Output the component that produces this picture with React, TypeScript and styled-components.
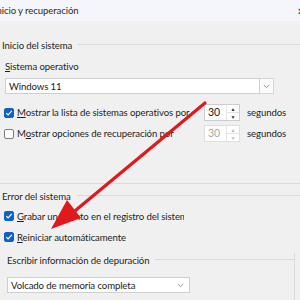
import styled, { createGlobalStyle } from "styled-components";

const GlobalStyle = createGlobalStyle`
  html, body {
    margin: 0;
    padding: 0;
    background: #f0f0f0;
  }
`;

const Window = styled.div`
  position: relative;
  width: 300px;
  height: 300px;
  overflow: hidden;
  background: #f0f0f0;
  font-family: Lato, "Noto Sans", sans-serif;
  font-size: 9.6px;
  letter-spacing: -0.1px;
  color: #1e1e1e;
`;

const TitleBar = styled.div`
  height: 21px;
  display: flex;
  align-items: center;
  justify-content: space-between;
  background: #f4f6fb;
`;

const Title = styled.span`
  margin-left: -6px;
  color: #2a2a2a;
`;

const Close = styled.span`
  margin-right: -5px;
  font-size: 10px;
  color: #333;
`;

const Body = styled.div`
  display: flex;
  flex-direction: column;
`;

const Group = styled.div<{ $inner?: boolean; $top: number; $pb: number }>`
  display: flex;
  flex-direction: column;
  margin-top: ${(p) => p.$top}px;
  padding-bottom: ${(p) => p.$pb}px;
  border-bottom: ${(p) => (p.$inner ? "none" : "1px solid #dadada")};
  border-right: ${(p) => (p.$inner ? "1px solid #dadada" : "none")};
  width: ${(p) => (p.$inner ? "294px" : "auto")};
`;

const GroupHead = styled.div<{ $indent: number }>`
  display: flex;
  align-items: center;
  height: 14px;
  padding-left: ${(p) => p.$indent}px;
`;

const Legend = styled.span`
  white-space: nowrap;
  color: #262626;
`;

const HeadLine = styled.span`
  flex: 1;
  height: 1px;
  margin-left: 6px;
  margin-top: -1px;
  background: #dadada;
`;

const FieldLabel = styled.div`
  height: 14px;
  line-height: 14px;
  margin: 8px 0 0 5px;
`;

const Combo = styled.div<{ $width: number; $left: number; $top: number }>`
  display: flex;
  align-items: stretch;
  width: ${(p) => p.$width}px;
  height: 16px;
  margin: ${(p) => p.$top}px 0 0 ${(p) => p.$left}px;
`;

const ComboField = styled.div`
  flex: 1;
  display: flex;
  align-items: center;
  justify-content: space-between;
  padding: 0 5px 0 3px;
  background: #fff;
  border: 1px solid #cfcfcf;
  color: #1a1a1a;
`;

const ComboButton = styled.div`
  width: 13px;
  display: flex;
  align-items: center;
  justify-content: center;
  background: #fbfbfb;
  border: 1px solid #d6d6d6;
  border-left: none;
`;

const Chevron = () => (
  <svg width="7" height="5" viewBox="0 0 7 5">
    <path d="M0.8 1 L3.5 3.6 L6.2 1" fill="none" stroke="#8a8a8a" strokeWidth="0.9" />
  </svg>
);

const Row = styled.div<{ $top: number; $height: number }>`
  display: flex;
  align-items: center;
  height: ${(p) => p.$height}px;
  margin: ${(p) => p.$top}px 0 0 4px;
`;

const Box = styled.span<{ $checked?: boolean }>`
  width: 10px;
  height: 10px;
  box-sizing: border-box;
  border-radius: 2px;
  flex: none;
  display: flex;
  align-items: center;
  justify-content: center;
  background: ${(p) => (p.$checked ? "#1063c4" : "#fff")};
  border: 1px solid ${(p) => (p.$checked ? "#1063c4" : "#7d7d7d")};
`;

const CheckLabel = styled.span<{ $width?: number }>`
  margin-left: 3px;
  white-space: nowrap;
  overflow: hidden;
  flex: none;
  width: ${(p) => (p.$width ? `${p.$width}px` : "auto")};
`;

const Spin = styled.div<{ $disabled?: boolean }>`
  width: 36px;
  height: 17px;
  box-sizing: border-box;
  display: flex;
  flex: none;
  background: #fff;
  border: 1px solid ${(p) => (p.$disabled ? "#dedede" : "#cdcdcd")};
  color: ${(p) => (p.$disabled ? "#a8a8a8" : "#1a1a1a")};
  font-size: 10.5px;
`;

const SpinValue = styled.span`
  flex: 1;
  padding-left: 3px;
  line-height: 15px;
`;

const SpinButtons = styled.div`
  width: 12px;
  display: flex;
  flex-direction: column;
  border-left: 1px solid #e4e4e4;
`;

const SpinButton = styled.span<{ $disabled?: boolean }>`
  flex: 1;
  display: flex;
  align-items: center;
  justify-content: center;
  font-size: 5px;
  color: ${(p) => (p.$disabled ? "#b8b8b8" : "#333")};
  & + & {
    border-top: 1px solid #e4e4e4;
  }
`;

const Units = styled.span`
  margin-left: 7px;
  white-space: nowrap;
`;

const Check = () => (
  <svg width="8" height="8" viewBox="0 0 8 8">
    <path d="M1.3 4.2 L3.1 6 L6.8 1.9" fill="none" stroke="#fff" strokeWidth="1.2" />
  </svg>
);

const Overlay = styled.svg`
  position: absolute;
  left: 0;
  top: 0;
  pointer-events: none;
`;

const Spinner = ({ disabled }: { disabled?: boolean }) => (
  <Spin $disabled={disabled}>
    <SpinValue>30</SpinValue>
    <SpinButtons>
      <SpinButton $disabled={disabled}>▲</SpinButton>
      <SpinButton $disabled={disabled}>▼</SpinButton>
    </SpinButtons>
  </Spin>
);

export default function App() {
  return (
    <>
      <GlobalStyle />
      <Window>
        <TitleBar>
          <Title>Inicio y recuperación</Title>
          <Close>✕</Close>
        </TitleBar>
        <Body>
          <Group $top={17} $pb={41}>
            <GroupHead $indent={2}>
              <Legend>Inicio del sistema</Legend>
              <HeadLine />
            </GroupHead>
            <FieldLabel>
              <u>S</u>istema operativo
            </FieldLabel>
            <Combo $width={269} $left={5} $top={4}>
              <ComboField>Windows 11</ComboField>
              <ComboButton>
                <Chevron />
              </ComboButton>
            </Combo>
            <Row $top={10} $height={17}>
              <Box $checked>
                <Check />
              </Box>
              <CheckLabel $width={187}>
                <u>M</u>ostrar la lista de sistemas operativos por
              </CheckLabel>
              <Spinner />
              <Units>segundos</Units>
            </Row>
            <Row $top={4} $height={17}>
              <Box />
              <CheckLabel $width={187}>
                M<u>o</u>strar opciones de recuperación por
              </CheckLabel>
              <Spinner disabled />
              <Units>segundos</Units>
            </Row>
          </Group>
          <Group $top={5} $pb={0}>
            <GroupHead $indent={2}>
              <Legend>Error del sistema</Legend>
              <HeadLine />
            </GroupHead>
            <Row $top={6} $height={14}>
              <Box $checked>
                <Check />
              </Box>
              <CheckLabel $width={167}>
                <u>G</u>rabar un evento en el registro del sistema
              </CheckLabel>
            </Row>
            <Row $top={7} $height={14}>
              <Box $checked>
                <Check />
              </Box>
              <CheckLabel>
                <u>R</u>einiciar automáticamente
              </CheckLabel>
            </Row>
            <Group $inner $top={9} $pb={20}>
              <GroupHead $indent={7}>
                <Legend>Escribir información de depuración</Legend>
                <HeadLine />
              </GroupHead>
              <Combo $width={183} $left={7} $top={10}>
                <ComboField>
                  Volcado de memoria completa
                  <Chevron />
                </ComboField>
              </Combo>
            </Group>
          </Group>
        </Body>
        <Overlay width="300" height="300" viewBox="0 0 300 300">
          <line x1="205" y1="103" x2="70" y2="215" stroke="#e0191c" strokeWidth="3.2" strokeLinecap="round" />
          <polygon points="51,229 81,218 67,200" fill="#e0191c" />
        </Overlay>
      </Window>
    </>
  );
}
